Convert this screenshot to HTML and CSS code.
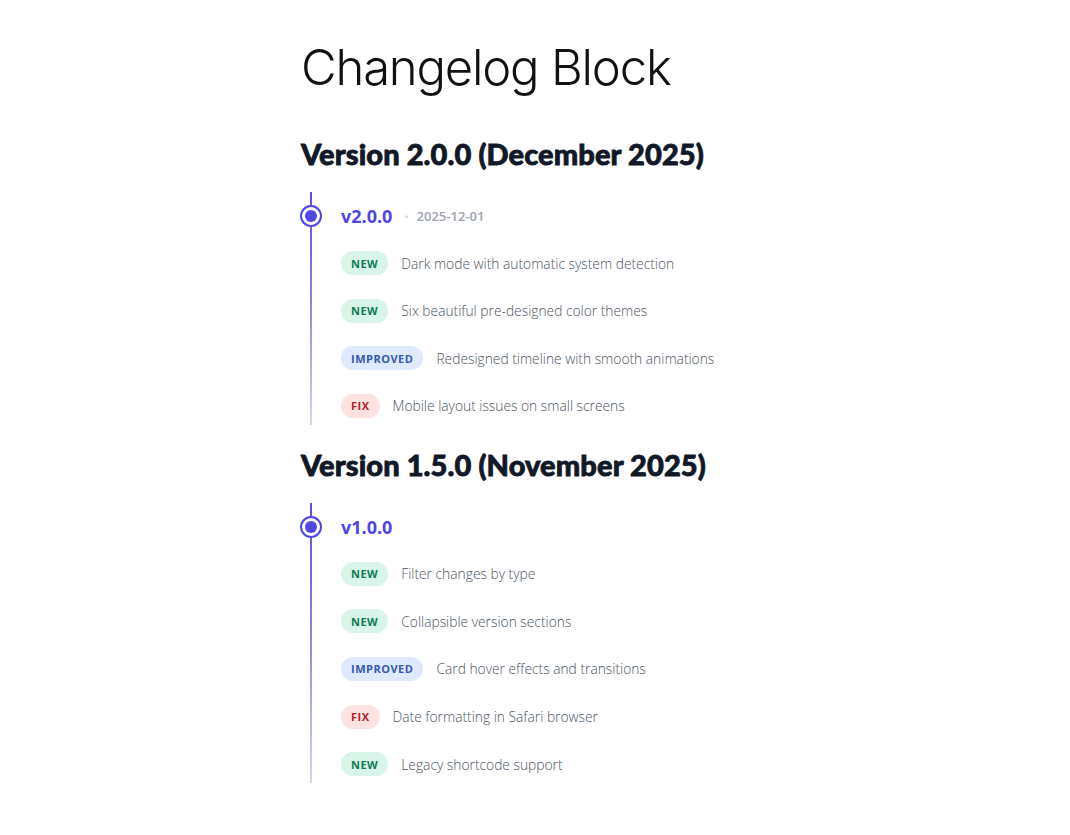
FILE: index.html
```html
<!DOCTYPE html>
<html lang="en">
<head>
<meta charset="utf-8">
<title>Changelog Block</title>
<link rel="stylesheet" href="styles.css">
</head>
<body>
<main class="page">
  <h1 class="title">Changelog Block</h1>

  <section class="release">
    <h2 class="release-heading">Version 2.0.0 (December 2025)</h2>
    <div class="timeline">
      <div class="version-row">
        <span class="dot"><span class="dot-inner"></span></span>
        <span class="version">v2.0.0</span>
        <span class="sep">•</span>
        <span class="date">2025-12-01</span>
      </div>
      <ul class="changes">
        <li class="change"><span class="badge badge-new">New</span><span class="change-text">Dark mode with automatic system detection</span></li>
        <li class="change"><span class="badge badge-new">New</span><span class="change-text">Six beautiful pre-designed color themes</span></li>
        <li class="change"><span class="badge badge-improved">Improved</span><span class="change-text">Redesigned timeline with smooth animations</span></li>
        <li class="change"><span class="badge badge-fix">Fix</span><span class="change-text">Mobile layout issues on small screens</span></li>
      </ul>
    </div>
  </section>

  <section class="release">
    <h2 class="release-heading">Version 1.5.0 (November 2025)</h2>
    <div class="timeline">
      <div class="version-row">
        <span class="dot"><span class="dot-inner"></span></span>
        <span class="version">v1.0.0</span>
      </div>
      <ul class="changes">
        <li class="change"><span class="badge badge-new">New</span><span class="change-text">Filter changes by type</span></li>
        <li class="change"><span class="badge badge-new">New</span><span class="change-text">Collapsible version sections</span></li>
        <li class="change"><span class="badge badge-improved">Improved</span><span class="change-text">Card hover effects and transitions</span></li>
        <li class="change"><span class="badge badge-fix">Fix</span><span class="change-text">Date formatting in Safari browser</span></li>
        <li class="change"><span class="badge badge-new">New</span><span class="change-text">Legacy shortcode support</span></li>
      </ul>
    </div>
  </section>
</main>
</body>
</html>
```

FILE: styles.css
```css
* {
  box-sizing: border-box;
}

html, body {
  margin: 0;
  padding: 0;
  background: #ffffff;
}

body {
  font-family: "Open Sans", "Liberation Sans", sans-serif;
  color: #111827;
}

.page {
  width: 468px;
  margin: 0 auto;
  padding-top: 36px;
}

.title {
  margin: 0;
  font-family: Inter, "Noto Sans", sans-serif;
  font-weight: 300;
  font-size: 49px;
  line-height: 64px;
  letter-spacing: -1.2px;
  color: #111111;
}

.release-heading {
  margin: 0;
  font-family: Lato, "Open Sans", sans-serif;
  font-weight: 900;
  font-size: 29px;
  line-height: 34px;
  letter-spacing: 0.1px;
  -webkit-text-stroke: 0.8px #111827;
  color: #111827;
}

.title + .release {
  margin-top: 37px;
}

.release + .release {
  margin-top: 23px;
}

.timeline {
  margin: 21px 0 0 9px;
  padding: 12px 0 7px 28px;
  border-left: 2px solid #6d5fd8;
  border-image: linear-gradient(to bottom, #5b4fd6 0%, #8b84d4 45%, #d9d8e6 100%) 1;
}

.version-row {
  position: relative;
  display: flex;
  align-items: center;
  height: 24px;
}

.dot {
  position: absolute;
  left: -40px;
  top: 1px;
  width: 22px;
  height: 22px;
  border-radius: 50%;
  background: #ffffff;
  border: 2px solid #4f46e5;
  display: flex;
  align-items: center;
  justify-content: center;
}

.dot-inner {
  width: 12px;
  height: 12px;
  border-radius: 50%;
  background: #4f46e5;
}

.version {
  font-weight: 700;
  font-size: 18px;
  color: #4f46e5;
  margin-left: 1px;
}

.sep {
  font-size: 11px;
  color: #d1d5db;
  margin: 0 8px 0 12px;
}

.date {
  font-weight: 600;
  font-size: 13px;
  color: #9ca3af;
}

.changes {
  list-style: none;
  margin: 23px 0 0;
  padding: 0;
  display: flex;
  flex-direction: column;
  gap: 23.6px;
}

.change {
  display: flex;
  align-items: center;
  gap: 13px;
  height: 24px;
}

.badge {
  display: inline-flex;
  align-items: center;
  height: 24px;
  padding: 0 10px;
  margin-left: 1px;
  border-radius: 12px;
  font-weight: 700;
  font-size: 11px;
  letter-spacing: 0.5px;
  text-transform: uppercase;
}

.badge-new {
  background: #d9f5ea;
  color: #0f7a55;
}

.badge-improved {
  background: #dfe9fd;
  color: #3458b6;
}

.badge-fix {
  background: #fde2e2;
  color: #b42323;
}

.change-text {
  font-weight: 300;
  font-size: 13.8px;
  color: #4b5563;
}
```
